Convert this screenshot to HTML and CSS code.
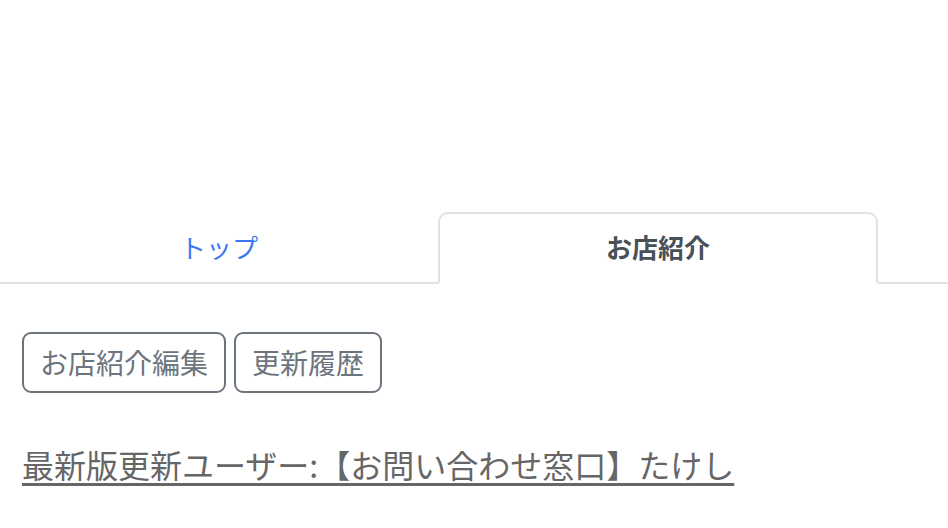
FILE: index.html
```html
<!DOCTYPE html>
<html lang="ja">
<head>
<meta charset="utf-8">
<link rel="stylesheet" href="styles.css">
</head>
<body>
<ul class="tabs">
  <li class="tab tab-first"><a class="tab-link" href="#">トップ</a></li>
  <li class="tab tab-second"><a class="tab-link active" href="#">お店紹介</a></li>
</ul>
<main class="content">
  <div class="actions">
    <a class="btn" href="#">お店紹介編集</a>
    <a class="btn" href="#">更新履歴</a>
  </div>
  <p class="updated"><a class="updated-link" href="#">最新版更新ユーザー:【お問い合わせ窓口】たけし</a></p>
</main>
</body>
</html>
```

FILE: styles.css
```css
html, body {
  margin: 0;
  padding: 0;
  background: #fff;
  font-family: "Noto Sans CJK JP", "Noto Sans", sans-serif;
}

.tabs {
  display: flex;
  list-style: none;
  margin: 212px 0 0 0;
  padding: 0;
  border-bottom: 2px solid #dee2e6;
}

.tab {
  margin-bottom: -2px;
}

.tab-first { width: 438px; }
.tab-second { width: 440px; }

.tab-link {
  display: block;
  box-sizing: border-box;
  height: 72px;
  padding: 12px 0 14px;
  border: 2px solid transparent;
  border-radius: 10px 10px 0 0;
  text-align: center;
  font-size: 26px;
  line-height: 42px;
  color: #3b78f0;
  text-decoration: none;
}

.tab-link.active {
  color: #495057;
  font-weight: 700;
  background: #fff;
  border-color: #dee2e6 #dee2e6 #fff;
}

.content {
  padding: 0 22px;
}

.actions {
  display: flex;
  gap: 8px;
  margin-top: 48px;
}

.btn {
  display: inline-block;
  box-sizing: border-box;
  height: 61px;
  padding: 7px 16px;
  border: 2px solid #6c757d;
  border-radius: 9px;
  font-size: 28px;
  line-height: 43px;
  color: #6c757d;
  text-decoration: none;
}

.updated {
  margin: 47px 0 0 0;
  font-size: 32px;
  line-height: 48px;
}

.updated-link {
  color: #666;
  text-decoration: underline;
  text-decoration-thickness: 3px;
  text-underline-offset: 5px;
}
```
